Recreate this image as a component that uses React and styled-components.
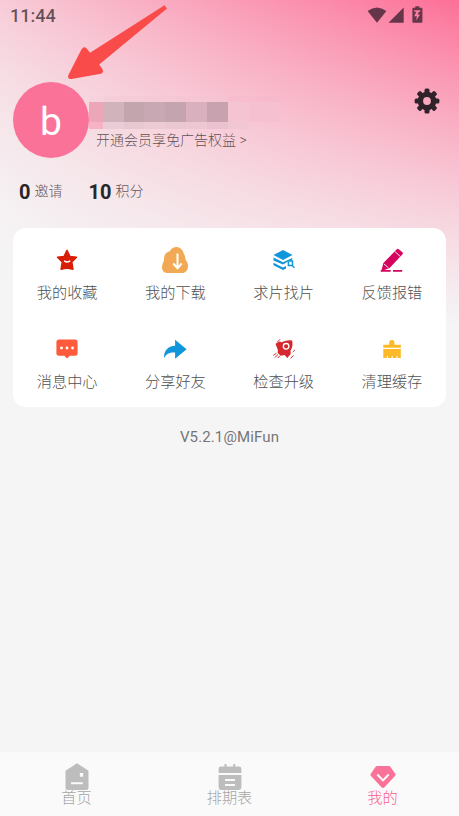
import React from "react";
import styled, { createGlobalStyle } from "styled-components";

const Global = createGlobalStyle`
  * { box-sizing: border-box; }
  body { margin: 0; background: #f5f5f5; font-family: Roboto, "Noto Sans CJK SC", sans-serif; }
`;

const Screen = styled.div`
  position: relative;
  width: 459px;
  height: 816px;
  display: flex;
  flex-direction: column;
  overflow: hidden;
  background:
    linear-gradient(to bottom, rgba(245, 245, 245, 0), #f5f5f5) 0 0 / 100% 326px no-repeat,
    linear-gradient(233deg, #fd6f97, #f5f5f5 95%) 0 0 / 100% 326px no-repeat,
    #f5f5f5;
`;

const StatusBar = styled.div`
  height: 32px;
  flex: none;
  display: flex;
  align-items: center;
  justify-content: space-between;
  padding: 0 35px 0 10px;
`;

const Clock = styled.span`
  font-size: 18px;
  font-weight: 500;
  line-height: 32px;
  color: rgba(0, 0, 0, 0.6);
`;

const StatusIcons = styled.svg`
  display: block;
  width: 57px;
  height: 18px;
  margin-top: -2px;
  fill: #65364a;
`;

const Profile = styled.header`
  height: 126px;
  flex: none;
  display: flex;
  align-items: flex-end;
  padding-left: 13px;
`;

const Avatar = styled.div`
  width: 76px;
  height: 76px;
  border-radius: 50%;
  background: #fb7299;
  color: #fff;
  font-size: 39px;
  line-height: 81px;
  text-align: center;
`;

const Identity = styled.div`
  flex: 1;
  height: 62px;
`;

const MosaicRow = styled.div`
  display: flex;
  height: ${(p) => p.$height}px;
`;

const MosaicCell = styled.i`
  width: ${(p) => p.$width}px;
  background: ${(p) => p.$tone};
`;

const Benefit = styled.div`
  margin: 1px 0 0 7px;
  font-size: 14px;
  font-weight: 300;
  line-height: 20px;
  color: rgba(0, 0, 0, 0.66);
`;

const Settings = styled.svg`
  width: 26px;
  height: 26px;
  margin: 0 19px 44px 0;
  fill: #30222a;
`;

const Stats = styled.div`
  height: 70px;
  flex: none;
  display: flex;
  gap: 26px;
  padding: 22px 0 0 19px;
`;

const Stat = styled.div`
  display: flex;
  align-items: center;
  gap: 4px;
  height: 24px;
  font-size: 20px;
  font-weight: 700;
  color: #29262a;
`;

const StatLabel = styled.span`
  font-size: 14px;
  font-weight: 300;
  line-height: 20px;
  color: #63575b;
  margin-top: -2px;
`;

const Card = styled.section`
  width: 433px;
  height: 179px;
  flex: none;
  margin: 0 13px;
  border-radius: 13px;
  background: #fff;
  display: grid;
  grid-template-columns: repeat(4, 1fr);
  grid-template-rows: 89px 90px;
`;

const Action = styled.div`
  display: flex;
  flex-direction: column;
  align-items: center;
  padding-top: 18px;
  font-size: 15.2px;
  font-weight: 300;
  line-height: 22px;
  color: #505050;

  svg {
    display: block;
    width: 28px;
    height: 28px;
    margin-bottom: 8px;
  }
`;

const Version = styled.div`
  flex: 1;
  padding-top: 20px;
  font-size: 15px;
  line-height: 20px;
  letter-spacing: 0.12px;
  text-align: center;
  color: #757575;
`;

const NavBar = styled.nav`
  height: 64px;
  flex: none;
  display: flex;
  background: #fafafa;
`;

const Tab = styled.div`
  flex: 1;
  display: flex;
  flex-direction: column;
  align-items: center;
  padding-top: 10px;
  font-size: 15.2px;
  font-weight: 300;
  line-height: 20px;
  color: ${(p) => (p.$active ? "#fb5f8c" : "#a6a6a6")};

  svg {
    display: block;
    width: 28px;
    height: 30px;
    margin: 0 0 -4px;
    fill: ${(p) => (p.$active ? "#fb7299" : "#bdbdbd")};
  }
`;

const Pointer = styled.svg`
  position: absolute;
  left: 60px;
  top: 0;
  width: 115px;
  height: 84px;
  fill: #f94b49;
`;

const mosaic = [
  {
    height: 6,
    cells: [
      [15, "rgba(245,205,218,.25)"], [123, "rgba(240,195,208,.3)"], [52, "rgba(245,180,202,.25)"],
    ],
  },
  {
    height: 20,
    cells: [
      [14, "#eba6b8"], [21, "#d1b3bc"], [20, "#c3a5ae"], [21, "#c8a8b2"], [21, "#c4a5af"],
      [21, "#d9b0bd"], [21, "#c8a2ae"], [21, "#f4c4d2"], [31, "#f5c0cf"],
    ],
  },
  {
    height: 7,
    cells: [
      [14, "#f7b3c6"], [21, "#e9cdd6"], [20, "#e7c8d1"], [21, "#eccbd5"], [21, "#eac7d1"],
      [21, "#edc8d3"], [21, "#ebc3d0"], [21, "#f2c7d4"],
    ],
  },
];

const actions = [
  {
    label: "我的收藏",
    icon: (
      <>
        <path d="M14 4.4l2.9 6 6.6.8-4.7 4.7 1.1 7.3-5.9-1.2-5.9 1.2 1.2-7.3-4.8-4.7 6.6-.8z" fill="#d81e06" stroke="#d81e06" strokeWidth="1.5" strokeLinejoin="round" />
        <path d="M11.6 15.1q2.4 1.8 5.1 0" fill="none" stroke="#fff" strokeWidth="1.5" strokeLinecap="round" />
      </>
    ),
  },
  {
    label: "我的下载",
    icon: (
      <>
        <path d="M6 27C2.2 26.7.5 23.5 1.2 19.5 1.5 17.2 2.5 16 3 14 2.8 9.5 4.5 6 8.8 5.2 11 1.5 14 .5 17.2 1.3c3.2.8 4.8 3.5 5.5 6.2 1.4 1.8 1.6 4.5 2 6.5 2 2.2 2.4 4.2 2.3 6.5C26.8 24.5 24.5 27 21 27z" fill="#f1a955" />
        <path d="M16.5 7.5v14M12.3 17.5l4.2 4.8 4.2-4.8" fill="none" stroke="#fff" strokeWidth="2" />
      </>
    ),
  },
  {
    label: "求片找片",
    icon: (
      <g fill="#1296db">
        <path d="M13 4l9.5 4.9-9.5 5.2L3.5 8.9z" />
        <path d="M3.5 11.6l9.5 4.7 7-3.4 2.2-.9v2.1l-5 2-4.2 2.3-9.5-4z" />
        <path d="M3.5 16.8l9.5 4.7 3-1.4v2.5l-3 1.3-9.5-4.7z" />
        <path d="M18.7 15h3.8v4.4h-4.1V15.4M21.8 19.3l2.6 2.5" fill="none" stroke="#1296db" strokeWidth="1.5" />
      </g>
    ),
  },
  {
    label: "反馈报错",
    icon: (
      <g fill="#d4045f">
        <path d="M18.8 3.3q1-1 2 0l3.6 2.9q1 .9.1 2L11.6 22 3.2 25.2 5.4 17z" />
        <path d="M16.9 5.6l5.2 4.6M6 18l4.4 3.8" fill="none" stroke="#fff" strokeWidth=".9" />
        <path d="M2.7 24.1h10v1.7h-10zM15 24.1h9.2v1.7H15z" />
      </g>
    ),
  },
  {
    label: "消息中心",
    icon: (
      <>
        <path d="M6 4.5h16q2.6 0 2.6 2.5v11.3q0 2.5-2.6 2.5h-5.2L14 23.5l-2.7-2.7H6q-2.6 0-2.6-2.5V7Q3.4 4.5 6 4.5z" fill="#ff5a3c" />
        <g fill="#fff"><circle cx="8.5" cy="13" r="1.4" /><circle cx="14" cy="13" r="1.4" /><circle cx="19.5" cy="13" r="1.4" /></g>
      </>
    ),
  },
  {
    label: "分享好友",
    icon: <path d="M14.1 4.8l11.5 9.5-11.5 9.4v-6.1C9 17.2 5.5 18.7 3 23.2 2.8 15.3 7 11.3 14.1 10.8z" fill="#1296db" />,
  },
  {
    label: "检查升级",
    icon: (
      <>
        <path d="M5.5 8.7l4-2.3 2.1.9q5.6-2.8 10.5-1.9 1.4 5.3-1.6 10.3l.2 3.4-3.4 3.8-2.7-2.8-4 .6-3-2.9.3-2.8z" fill="#d4272e" />
        <circle cx="16.1" cy="11.3" r="2.8" fill="#d4272e" stroke="#fff" strokeWidth="1.3" />
        <path d="M7.1 7.3l2.8-2.9M3.3 20.4l3.1-2.2M4.7 22.6l3.3-3.1M7.7 23.2l2.2-2.5M22.7 17l2.2-2M20.5 23.3l3-2.7" fill="none" stroke="#d4272e" strokeWidth="1" />
      </>
    ),
  },
  {
    label: "清理缓存",
    icon: (
      <path d="M5.3 9.8h5.9V7q0-2 2.6-2t2.6 2v2.8h6.4v3H5.3zM5.3 13.9h17.5v9h-3.2v-1.6h-1.2v1.6h-3.6v-1.6h-1.2v1.6h-3.6v-1.6H8.8v1.6H5.3z" fill="#fdb927" />
    ),
  },
];

const tabs = [
  {
    label: "首页",
    icon: (
      <>
        <path d="M14 1.2l11.5 7.5V26q0 2-2 2h-19q-2 0-2-2V8.7z" />
        <path d="M16.8 11h3.4v3.8h-3.4zM8 20.2h11.8v2H8z" fill="#fafafa" />
      </>
    ),
  },
  {
    label: "排期表",
    icon: (
      <>
        <path d="M5 4.5h3.5V2h2v2.5h6.8V2h2v2.5H23q2.4 0 2.4 2.2V11H2.6V6.7q0-2.2 2.4-2.2zM2.6 13h22.8v12q0 3-3 3H5.6q-3 0-3-3z" />
        <path d="M9 17h10v2H9zM9 22h10v2H9z" fill="#fafafa" />
      </>
    ),
  },
  {
    label: "我的",
    active: true,
    icon: (
      <>
        <path d="M8.3 4h11.4q1 0 1.7.8l5 7.2q.5.8-.2 1.7L15.5 25.2q-1.5 1.4-3 0L1.8 13.7q-.7-.9-.2-1.7l5-7.2Q7.3 4 8.3 4z" />
        <path d="M8.3 12.5l5.7 5.9 5.7-5.9" fill="none" stroke="#fff" strokeWidth="2" />
      </>
    ),
  },
];

const teeth = [0, 45, 90, 135, 180, 225, 270, 315];

export default function App() {
  return (
    <Screen>
      <Global />
      <StatusBar>
        <Clock>11:44</Clock>
        <StatusIcons viewBox="0 0 57 18">
          <path d="M.6 5.1q9.3-7.2 18.8 0L10 16.7zM36.7 1.5v15.2H21.5z" />
          <path fillRule="evenodd" d="M48.3.2h4v1.6h2.2q.9 0 .9.9v13.1q0 .9-.9.9h-8.2q-.9 0-.9-.9V2.7q0-.9.9-.9h2zM47.2 4.2v1.6h2.2l-2.2 4.4h2.7l-.8 4.4 4-6h-2.4l1.2-2.8h1.4V4.2z" />
        </StatusIcons>
      </StatusBar>
      <Profile>
        <Avatar>b</Avatar>
        <Identity>
          {mosaic.map((row, r) => (
            <MosaicRow key={r} $height={row.height}>
              {row.cells.map(([width, tone], c) => (
                <MosaicCell key={c} $width={width} $tone={tone} />
              ))}
            </MosaicRow>
          ))}
          <Benefit>开通会员享免广告权益 &gt;</Benefit>
        </Identity>
        <Settings viewBox="-13 -13 26 26">
          <path fillRule="evenodd" d="M0-9.3A9.3 9.3 0 1 1 0 9.3 9.3 9.3 0 1 1 0-9.3zM0-3.9A3.9 3.9 0 1 0 0 3.9 3.9 3.9 0 1 0 0-3.9z" />
          {teeth.map((angle) => (
            <rect key={angle} x="-2.5" y="-12.4" width="5" height="6" rx="1.5" transform={`rotate(${angle})`} />
          ))}
        </Settings>
      </Profile>
      <Stats>
        <Stat>0<StatLabel>邀请</StatLabel></Stat>
        <Stat>10<StatLabel>积分</StatLabel></Stat>
      </Stats>
      <Card>
        {actions.map(({ label, icon }) => (
          <Action key={label}>
            <svg viewBox="0 0 28 28">{icon}</svg>
            {label}
          </Action>
        ))}
      </Card>
      <Version>V5.2.1@MiFun</Version>
      <NavBar>
        {tabs.map(({ label, icon, active }) => (
          <Tab key={label} $active={active}>
            <svg viewBox="0 0 28 30">{icon}</svg>
            {label}
          </Tab>
        ))}
      </NavBar>
      <Pointer viewBox="60 0 115 84">
        <path d="M164.5 5.2l2.5 3.2L99.2 64.5l3.4 5q1.3 3.2-1.6 4.2L71.5 79q-4.5.5-3.1-4l13-25.6q2.6-3.6 5.3-1l3.4 4.4z" />
      </Pointer>
    </Screen>
  );
}
